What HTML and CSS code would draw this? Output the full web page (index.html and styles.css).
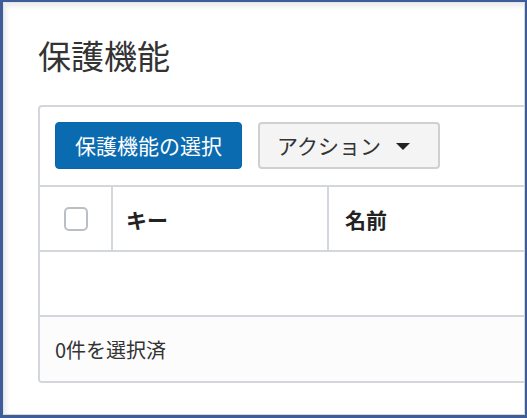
FILE: index.html
```html
<!DOCTYPE html>
<html lang="ja">
<head>
<meta charset="utf-8">
<link rel="stylesheet" href="styles.css">
</head>
<body>
<div class="frame">
  <div class="inner">
    <h1 class="title">保護機能</h1>
    <div class="card">
      <div class="toolbar">
        <button class="btn btn-primary">保護機能の選択</button>
        <button class="btn btn-default">アクション<span class="caret"></span></button>
      </div>
      <div class="row head">
        <div class="cell cell-check"><span class="checkbox"></span></div>
        <div class="cell cell-key">キー</div>
        <div class="cell cell-name">名前</div>
      </div>
      <div class="row empty"></div>
      <div class="footer">0件を選択済</div>
    </div>
  </div>
</div>
</body>
</html>
```
FILE: styles.css
```css
html, body {
  margin: 0;
  padding: 0;
  background: #ffffff;
}
body {
  font-family: "Noto Sans CJK JP", "Noto Sans", sans-serif;
  color: #333333;
}
.frame {
  width: 527px;
  height: 418px;
  box-sizing: border-box;
  border-style: solid;
  border-color: #3e5c9a;
  border-width: 2px 2px 3px 3px;
  overflow: hidden;
}
.inner {
  height: 100%;
  box-sizing: border-box;
  border-top: 1px solid #e4e4e4;
  border-left: 1px solid #e4e4e4;
  border-right: 1px solid #d6d6d6;
  border-bottom: 1px solid #d6d6d6;
  box-shadow: inset 3px 4px 4px rgba(0, 0, 0, 0.07);
  padding: 36px 0 0 34px;
  overflow: hidden;
}
.title {
  margin: 0 0 33px 0;
  font-size: 33px;
  line-height: 33px;
  font-weight: normal;
  color: #333;
}
.card {
  width: 560px;
  border: 2px solid #d3d7dc;
  border-radius: 4px;
  background: #fff;
  overflow: hidden;
}
.toolbar {
  display: flex;
  gap: 16px;
  padding: 15px 15px 16px 15px;
}
.btn {
  font-family: inherit;
  font-size: 21px;
  height: 47px;
  border-radius: 4px;
  padding: 0 18px;
  display: flex;
  align-items: center;
  box-sizing: border-box;
  line-height: 1;
}
.btn-primary {
  width: 187px;
  background: #0a6bb0;
  border: 1px solid #0a66a8;
  color: #ffffff;
  justify-content: center;
}
.btn-default {
  width: 182px;
  background: #f4f4f4;
  border: 2px solid #d0d0d0;
  color: #333;
  padding-left: 17px;
}
.caret {
  display: inline-block;
  width: 0;
  height: 0;
  border-left: 7px solid transparent;
  border-right: 7px solid transparent;
  border-top: 7px solid #222;
  margin-left: 15px;
  margin-top: 2px;
}
.row {
  border-top: 2px solid #d3d7dc;
  height: 63px;
}
.head {
  display: grid;
  grid-template-columns: 73px 216px 1fr;
}
.cell {
  display: flex;
  align-items: center;
  font-size: 21px;
  font-weight: bold;
  color: #222;
}
.cell-check {
  justify-content: center;
  border-right: 2px solid #d3d7dc;
}
.cell-key {
  padding-left: 13px;
  border-right: 2px solid #d3d7dc;
}
.cell-name {
  padding-left: 16px;
}
.checkbox {
  width: 24px;
  height: 24px;
  box-sizing: border-box;
  border: 2px solid #babfc6;
  border-radius: 5px;
  background: #fff;
}
.footer {
  border-top: 2px solid #d3d7dc;
  height: 64px;
  display: flex;
  align-items: center;
  padding-left: 15px;
  font-size: 20px;
  background: #fcfcfc;
  color: #333;
}
```
